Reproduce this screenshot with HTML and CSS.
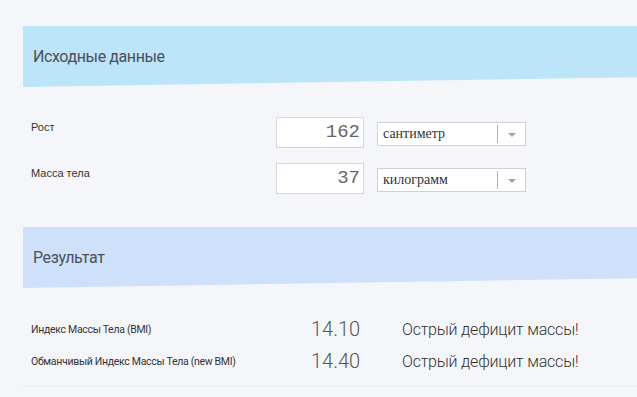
FILE: index.html
```html
<!DOCTYPE html>
<html lang="ru">
<head>
    <meta charset="UTF-8">
    <title>Индекс массы тела</title>
    <link rel="stylesheet" href="styles.css">
</head>
<body>
    <div class="page">
        <div class="band band-input">
            <h2>Исходные данные</h2>
        </div>
        <div class="fields">
            <div class="field">
                <label>Рост</label>
                <div class="num">162</div>
                <div class="select">
                    <span class="select-text">сантиметр</span>
                    <span class="select-btn"><i class="arrow"></i></span>
                </div>
            </div>
            <div class="field">
                <label>Масса тела</label>
                <div class="num">37</div>
                <div class="select">
                    <span class="select-text">килограмм</span>
                    <span class="select-btn"><i class="arrow"></i></span>
                </div>
            </div>
        </div>

        <div class="band band-result">
            <h2>Результат</h2>
        </div>
        <div class="results">
            <div class="result">
                <span class="res-name">Индекс Массы Тела (BMI)</span>
                <span class="res-value">14.10</span>
                <span class="res-text">Острый дефицит массы!</span>
            </div>
            <div class="result">
                <span class="res-name">Обманчивый Индекс Массы Тела (new BMI)</span>
                <span class="res-value">14.40</span>
                <span class="res-text">Острый дефицит массы!</span>
            </div>
        </div>
    </div>
</body>
</html>
```

FILE: styles.css
```css
body {
    margin: 0;
    background: #f5f6fa;
    font-family: 'Liberation Sans', Arial, sans-serif;
    color: #333;
    overflow: hidden;
}
.page {
    padding: 26px 0 0 23px;
}
.band {
    height: 61px;
    display: flex;
    align-items: center;
    padding-left: 10px;
    clip-path: polygon(0 0, 100% 0, 100% 84%, 0 100%); /* нижний край скошен */
}
.band h2 {
    margin: 0;
    font-family: 'Roboto', sans-serif;
    font-weight: 400;
    font-size: 16px;
    color: #4a5058;
    letter-spacing: -0.4px;
    margin-top: -1px;
}
.band-input {
    background: #bde5fa;
}
.band-result {
    background: #cfe0fb;
}
.fields {
    padding: 30px 0 33px 8px;
    display: flex;
    flex-direction: column;
    gap: 15px;
}
.field {
    display: grid;
    grid-template-columns: 232px 88px 149px;
    column-gap: 13px;
    align-items: center;
}
.field label {
    font-size: 11px;
    color: #333;
    align-self: start;
    padding-top: 4px;
}
.num {
    box-sizing: border-box;
    height: 31px;
    background: #fff;
    border: 1px solid #d5d9de;
    text-align: right;
    padding-right: 3px;
    font-family: 'Liberation Mono', monospace;
    font-size: 19px;
    line-height: 29px;
    color: #666;
}
.select {
    box-sizing: border-box;
    height: 24px;
    margin-top: 3px;
    background: #fff;
    border: 1px solid #cfd3d9;
    display: flex;
    align-items: center;
}
.select-text {
    flex: 1;
    padding-left: 5px;
    font-family: 'Liberation Serif', serif;
    font-size: 14px;
    color: #333;
}
.select-btn {
    width: 27px;
    height: 18px;
    border-left: 1px solid #b0b0b0;
    display: flex;
    align-items: center;
    justify-content: center;
}
.arrow {
    width: 0;
    height: 0;
    border-left: 4px solid transparent;
    border-right: 4px solid transparent;
    border-top: 4px solid #a0a4a8;
    margin-top: 2px;
}
.results {
    padding: 28px 0 12px 8px;
    border-bottom: 1px solid #eceef2;
    display: flex;
    flex-direction: column;
    gap: 6px;
}
.result {
    display: grid;
    grid-template-columns: 280px 91px 1fr;
    align-items: center;
    height: 26px;
}
.res-name {
    font-family: 'Roboto', sans-serif;
    font-size: 10.5px;
    color: #333;
    letter-spacing: -0.3px;
}
.res-value {
    font-family: 'Roboto', sans-serif;
    font-weight: 300;
    font-size: 20px;
    color: #555;
}
.res-text {
    font-family: 'Roboto', sans-serif;
    font-weight: 300;
    font-size: 16px;
    color: #333;
    letter-spacing: -0.2px;
}
```
